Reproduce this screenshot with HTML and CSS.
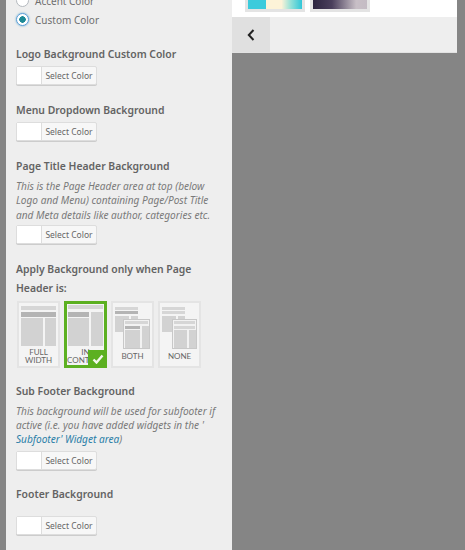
FILE: index.html
```html
<!DOCTYPE html>
<html>
<head>
  <title>Customizer</title>
  <link rel="stylesheet" href="styles.css">
</head>
<body>
  <div class="sidebar">
    <div class="radio-row radio-first"><span class="radio"></span>Accent Color</div>
    <div class="radio-row"><span class="radio radio-on"></span>Custom Color</div>

    <div class="control control-logo">
      <h4>Logo Background Custom Color</h4>
      <div class="picker"><span class="swatch"></span><span class="picker-text">Select Color</span></div>
    </div>

    <div class="control control-menu">
      <h4>Menu Dropdown Background</h4>
      <div class="picker"><span class="swatch"></span><span class="picker-text">Select Color</span></div>
    </div>

    <div class="control control-title">
      <h4>Page Title Header Background</h4>
      <p class="desc">This is the Page Header area at top (below Logo and Menu) containing Page/Post Title and Meta details like author, categories etc.</p>
      <div class="picker"><span class="swatch"></span><span class="picker-text">Select Color</span></div>
    </div>

    <div class="control control-apply">
      <h4 class="tall">Apply Background only when Page Header is:</h4>
      <div class="tiles">
        <div class="tile">
          <svg class="layout" width="35" height="41" viewBox="0 0 35 41">
            <rect x="0" y="1" width="35" height="4" fill="#d6d6d6"/>
            <rect x="0" y="7" width="35" height="5" fill="#b4b4b4"/>
            <rect x="0" y="13" width="22" height="28" fill="#d2d2d2"/>
            <rect x="24" y="13" width="11" height="28" fill="#d2d2d2"/>
          </svg>
          <span class="tile-label">FULL WIDTH</span>
        </div>
        <div class="tile tile-on">
          <svg class="layout" width="35" height="41" viewBox="0 0 35 41">
            <rect x="0" y="0" width="35" height="4" fill="#d6d6d6"/>
            <rect x="0" y="7" width="21" height="5" fill="#b4b4b4"/>
            <rect x="0" y="13" width="21" height="28" fill="#d2d2d2"/>
            <rect x="23" y="7" width="12" height="34" fill="#d2d2d2"/>
          </svg>
          <span class="tile-label">IN CONTENT</span>
          <span class="check">
            <svg width="12" height="10" viewBox="0 0 12 10"><path d="M1.5 5.5 L4.5 8.5 L10.5 1.5" fill="none" stroke="#f4f8ee" stroke-width="2.4"/></svg>
          </span>
        </div>
        <div class="tile">
          <svg class="layout" width="35" height="44" viewBox="0 0 35 44">
            <rect x="0" y="2" width="23" height="3" fill="#d6d6d6"/>
            <rect x="0" y="6" width="23" height="3" fill="#b4b4b4"/>
            <rect x="0" y="11" width="14" height="16" fill="#d2d2d2"/>
            <rect x="16" y="11" width="7" height="3" fill="#d2d2d2"/>
            <rect x="8.5" y="14.5" width="26" height="29" fill="#f2f2f2" stroke="#c8c8c8"/>
            <rect x="10" y="16" width="23" height="3" fill="#d6d6d6"/>
            <rect x="10" y="21" width="15" height="3" fill="#b4b4b4"/>
            <rect x="10" y="25" width="15" height="18" fill="#d2d2d2"/>
            <rect x="27" y="21" width="7" height="22" fill="#d2d2d2"/>
          </svg>
          <span class="tile-label tile-label-one">BOTH</span>
        </div>
        <div class="tile">
          <svg class="layout" width="35" height="44" viewBox="0 0 35 44">
            <rect x="0" y="2" width="23" height="3" fill="#d6d6d6"/>
            <rect x="0" y="6" width="23" height="3" fill="#d6d6d6"/>
            <rect x="0" y="11" width="14" height="16" fill="#d2d2d2"/>
            <rect x="16" y="11" width="7" height="3" fill="#d2d2d2"/>
            <rect x="10.5" y="14.5" width="24" height="29" fill="#f2f2f2" stroke="#c8c8c8"/>
            <rect x="12" y="16" width="21" height="3" fill="#d6d6d6"/>
            <rect x="12" y="21" width="21" height="3" fill="#d6d6d6"/>
            <rect x="12" y="25" width="13" height="18" fill="#d2d2d2"/>
            <rect x="27" y="25" width="7" height="18" fill="#d2d2d2"/>
          </svg>
          <span class="tile-label tile-label-one">NONE</span>
        </div>
      </div>
    </div>

    <div class="control control-sub">
      <h4>Sub Footer Background</h4>
      <p class="desc">This background will be used for subfooter if active (i.e. you have added widgets in the '<br><a href="#">Subfooter' Widget area</a>)</p>
      <div class="picker"><span class="swatch"></span><span class="picker-text">Select Color</span></div>
    </div>

    <div class="control control-footer">
      <h4>Footer Background</h4>
      <div class="picker"><span class="swatch"></span><span class="picker-text">Select Color</span></div>
    </div>
  </div>

  <div class="preview">
    <div class="thumbs">
      <div class="thumb thumb-light"></div>
      <div class="thumb thumb-dark"></div>
    </div>
    <div class="back-bar">
      <div class="back-btn">
        <svg width="8" height="12" viewBox="0 0 8 12"><path d="M6.5 1 L1.8 6 L6.5 11" fill="none" stroke="#222" stroke-width="2"/></svg>
      </div>
    </div>
  </div>
</body>
</html>
```

FILE: styles.css
```css
html, body {
  margin: 0;
  height: 550px;
  overflow: hidden;
}

body {
  display: flex;
  align-items: flex-start;
  background-color: #858585;
  font-family: "Noto Sans", sans-serif;
  color: #555;
}

.sidebar {
  width: 216px;
  height: 550px;
  margin-left: 6px;
  padding-left: 10px;
  background-color: #eeeeee;
  overflow: hidden;
}

.radio-row {
  display: flex;
  align-items: center;
  height: 19px;
  font-size: 10px;
  color: #6f6f6f;
}

.radio-first {
  margin-top: -9px;
}

.radio {
  box-sizing: border-box;
  width: 13px;
  height: 13px;
  margin-right: 6px;
  border: 1px solid #b4b9be;
  border-radius: 50%;
  background-color: #fff;
}

.radio-on {
  border-color: #5b9dd9;
  box-shadow: 0 0 2px rgba(30, 140, 190, 0.8);
  background: radial-gradient(circle, #1e8a96 0 3px, #fff 3.5px);
}

h4 {
  margin: 0 0 -1px;
  padding-top: 1px;
  font-size: 10.4px;
  font-weight: 600;
  line-height: 19px;
  color: #636363;
}

h4.tall {
  width: 190px;
}

.control-logo { margin-top: 15px; }
.control-menu { margin-top: 15px; }
.control-title { margin-top: 15px; }
.control-apply { margin-top: 15px; }
.control-sub { margin-top: 13px; }
.control-footer { margin-top: 14px; }

.control-footer h4 {
  margin-bottom: 12px;
}

.control h4 + .picker {
  margin-top: 3px;
}

.desc {
  width: 204px;
  margin: 4px 0 3px;
  font-size: 10.1px;
  font-style: italic;
  line-height: 14.3px;
  color: #7a7a7a;
}

.control-sub .desc {
  margin-bottom: 4px;
}

.desc a {
  color: #2a7ea8;
  text-decoration: none;
}

.picker {
  display: flex;
  width: 81px;
  height: 19px;
  border: 1px solid #ddd;
  box-sizing: border-box;
  box-shadow: 0 1px 0 #ccc;
  border-radius: 2px;
  background-color: #f7f7f7;
}

.swatch {
  width: 24px;
  background-color: #fff;
  border-right: 1px solid #ddd;
}

.picker-text {
  flex: 1;
  font-size: 8.5px;
  line-height: 18px;
  text-align: center;
  color: #666;
}

.tiles {
  display: flex;
  gap: 4px;
  margin-top: 4px;
  margin-left: 1px;
}

.tile {
  position: relative;
  box-sizing: border-box;
  width: 43px;
  height: 67px;
  padding-top: 2px;
  border: 2px solid #e4e4e4;
  display: flex;
  flex-direction: column;
  align-items: center;
  background-color: #f4f4f4;
}

.tile-on {
  border: 3px solid #5cb021;
  padding-top: 1px;
}

.layout {
  display: block;
  flex: none;
}

.tile-label {
  width: 100%;
  margin-top: 2px;
  font-family: Lato, sans-serif;
  font-size: 8px;
  line-height: 8.5px;
  text-align: center;
  color: #666;
}

.tile-label-one {
  margin-top: 3px;
}

.check {
  position: absolute;
  right: -3px;
  bottom: -3px;
  display: flex;
  align-items: center;
  justify-content: center;
  width: 19px;
  height: 18px;
  background-color: #5cb021;
}

.preview {
  width: 225px;
  height: 53px;
  background-color: #fff;
}

.thumbs {
  display: flex;
  gap: 5px;
  height: 17px;
  padding-left: 13px;
  overflow: hidden;
}

.thumb {
  box-sizing: border-box;
  width: 60px;
  height: 15px;
  margin-top: -3px;
  border: 3px solid #e4e4e4;
}

.thumb-light {
  background: linear-gradient(90deg, #3ccbdc 0 34%, #fdf3d8 34% 62%, #8fe0d8 80%, #30c6d8);
}

.thumb-dark {
  background: linear-gradient(90deg, #2c2440, #4a3f5c 35%, #c8bfc6 80%, #c4bcc4);
}

.back-bar {
  height: 36px;
  background-color: #eeeeee;
  border-bottom: 1px solid #e2e2e2;
  box-sizing: border-box;
}

.back-btn {
  display: flex;
  align-items: center;
  justify-content: center;
  width: 38px;
  height: 35px;
  background-color: #e0e0e0;
}
```
